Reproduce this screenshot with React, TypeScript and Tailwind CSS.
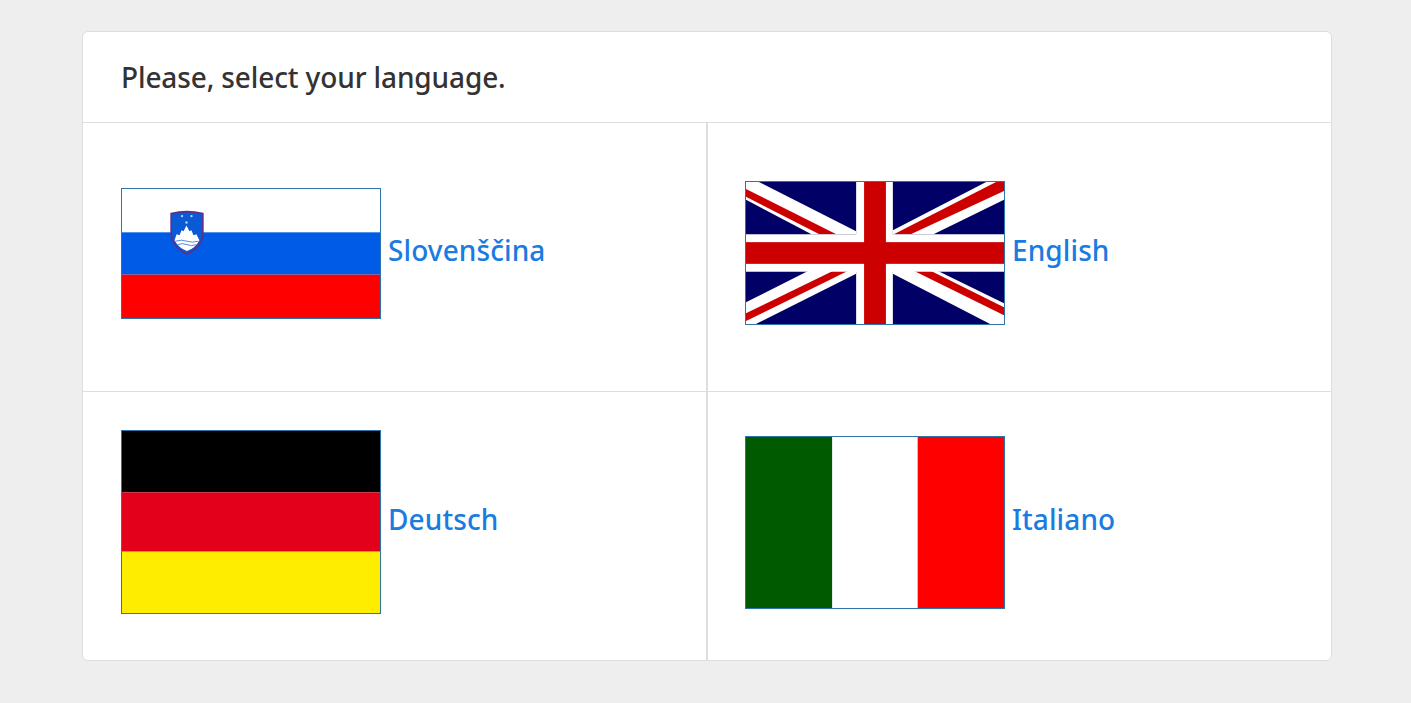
const font = "font-['Noto_Sans',sans-serif]";

function Flag({ h, children }: { h: number; children: React.ReactNode }) {
  return (
    <svg
      width="260"
      height={h}
      viewBox={`0 0 260 ${h}`}
      preserveAspectRatio="none"
      className="block shrink-0 border border-[#2f74a8] bg-white"
    >
      {children}
    </svg>
  );
}

function Slovenia() {
  return (
    <Flag h={131}>
      <rect width="260" height="44" fill="#fff" />
      <rect y="44" width="260" height="43" fill="#005ce6" />
      <rect y="87" width="260" height="44" fill="#ff0000" />
      {/* coat of arms */}
      <path d="M49.5 25 Q65 21 81.5 25 L81.5 46 Q80 59 65.5 66 Q51 59 49.5 46 Z" fill="#0a5ad6" stroke="#5f2f86" strokeWidth="1.6" />
      <path d="M53 52 L55 46 L58 47 L60 42 L62 43 L65 37 L68 43 L70 42 L72 47 L75 46 L78 52 Q74 60 65.5 63 Q57 60 53 52 Z" fill="#fff" />
      <path d="M54 53 Q60 51 65.5 53 T77 53 M56 56.5 Q61 54.5 65.5 56.5 T75 56.5" fill="none" stroke="#2a6fd8" strokeWidth="0.8" />
      <circle cx="60.5" cy="27.5" r="1.2" fill="#b9d3ee" />
      <circle cx="70" cy="27.5" r="1.2" fill="#b9d3ee" />
      <circle cx="65" cy="34" r="1.2" fill="#b9d3ee" />
    </Flag>
  );
}

function Britain() {
  return (
    <Flag h={144}>
      <rect width="260" height="144" fill="#000066" />
      <polygon points="0,0 13,0 111,50 111,53 66,53 0,18" fill="#fff" />
      <polygon points="260,0 242,0 148,49 148,53 189,53 260,18" fill="#fff" />
      <polygon points="0,122 63,90 111,90 111,93 10,144 0,144" fill="#fff" />
      <polygon points="148,90 193,90 260,123 260,144 246,144 148,93" fill="#fff" />
      <polygon points="0,7 91,53 74,53 0,15" fill="#cc0000" />
      <polygon points="260,0 252,0 149,53 166,53 260,9" fill="#cc0000" />
      <polygon points="0,133 0,141 103,90 88,90" fill="#cc0000" />
      <polygon points="169,90 186,90 260,127 260,135" fill="#cc0000" />
      <rect x="111" width="37" height="144" fill="#fff" />
      <rect y="53" width="260" height="38" fill="#fff" />
      <rect x="119" width="22" height="144" fill="#cc0000" />
      <rect y="61" width="260" height="22" fill="#cc0000" />
    </Flag>
  );
}

function Germany() {
  return (
    <Flag h={184}>
      <rect width="260" height="62" fill="#000" />
      <rect y="62" width="260" height="60" fill="#e2001a" />
      <rect y="122" width="260" height="62" fill="#ffed00" />
    </Flag>
  );
}

function Italy() {
  return (
    <Flag h={173}>
      <rect width="87" height="173" fill="#005a00" />
      <rect x="87" width="86" height="173" fill="#fff" />
      <rect x="173" width="87" height="173" fill="#ff0000" />
    </Flag>
  );
}

function Cell({ flag, label, className }: { flag: React.ReactNode; label: string; className: string }) {
  return (
    <div className={`flex items-center pb-2 ${className}`}>
      {flag}
      <a href="#" className="mb-[6px] ml-[7px] text-[28px] leading-8 font-medium tracking-[0.1px] text-[#1a7be0]">
        {label}
      </a>
    </div>
  );
}

export default function App() {
  return (
    <div className={`min-h-[703px] bg-[#eeeeee] px-[82px] pt-[31px] ${font}`}>
      <div className="w-[1250px] overflow-hidden rounded-md border border-[#dedede] bg-white">
        <div className="flex h-[91px] items-center border-b border-[#dedede] pl-[38px]">
          <h1 className="text-[28px] leading-8 font-medium tracking-[-0.12px] text-[#333333]">Please, select your language.</h1>
        </div>
        <div className="grid grid-cols-2">
          <Cell flag={<Slovenia />} label="Slovenščina" className="h-[269px] border-r border-b border-[#dedede] pl-[38px]" />
          <Cell flag={<Britain />} label="English" className="h-[269px] border-b border-l border-[#dedede] pl-[37px]" />
          <Cell flag={<Germany />} label="Deutsch" className="h-[268px] border-r border-[#dedede] pl-[38px]" />
          <Cell flag={<Italy />} label="Italiano" className="h-[268px] border-l border-[#dedede] pl-[37px]" />
        </div>
      </div>
    </div>
  );
}
